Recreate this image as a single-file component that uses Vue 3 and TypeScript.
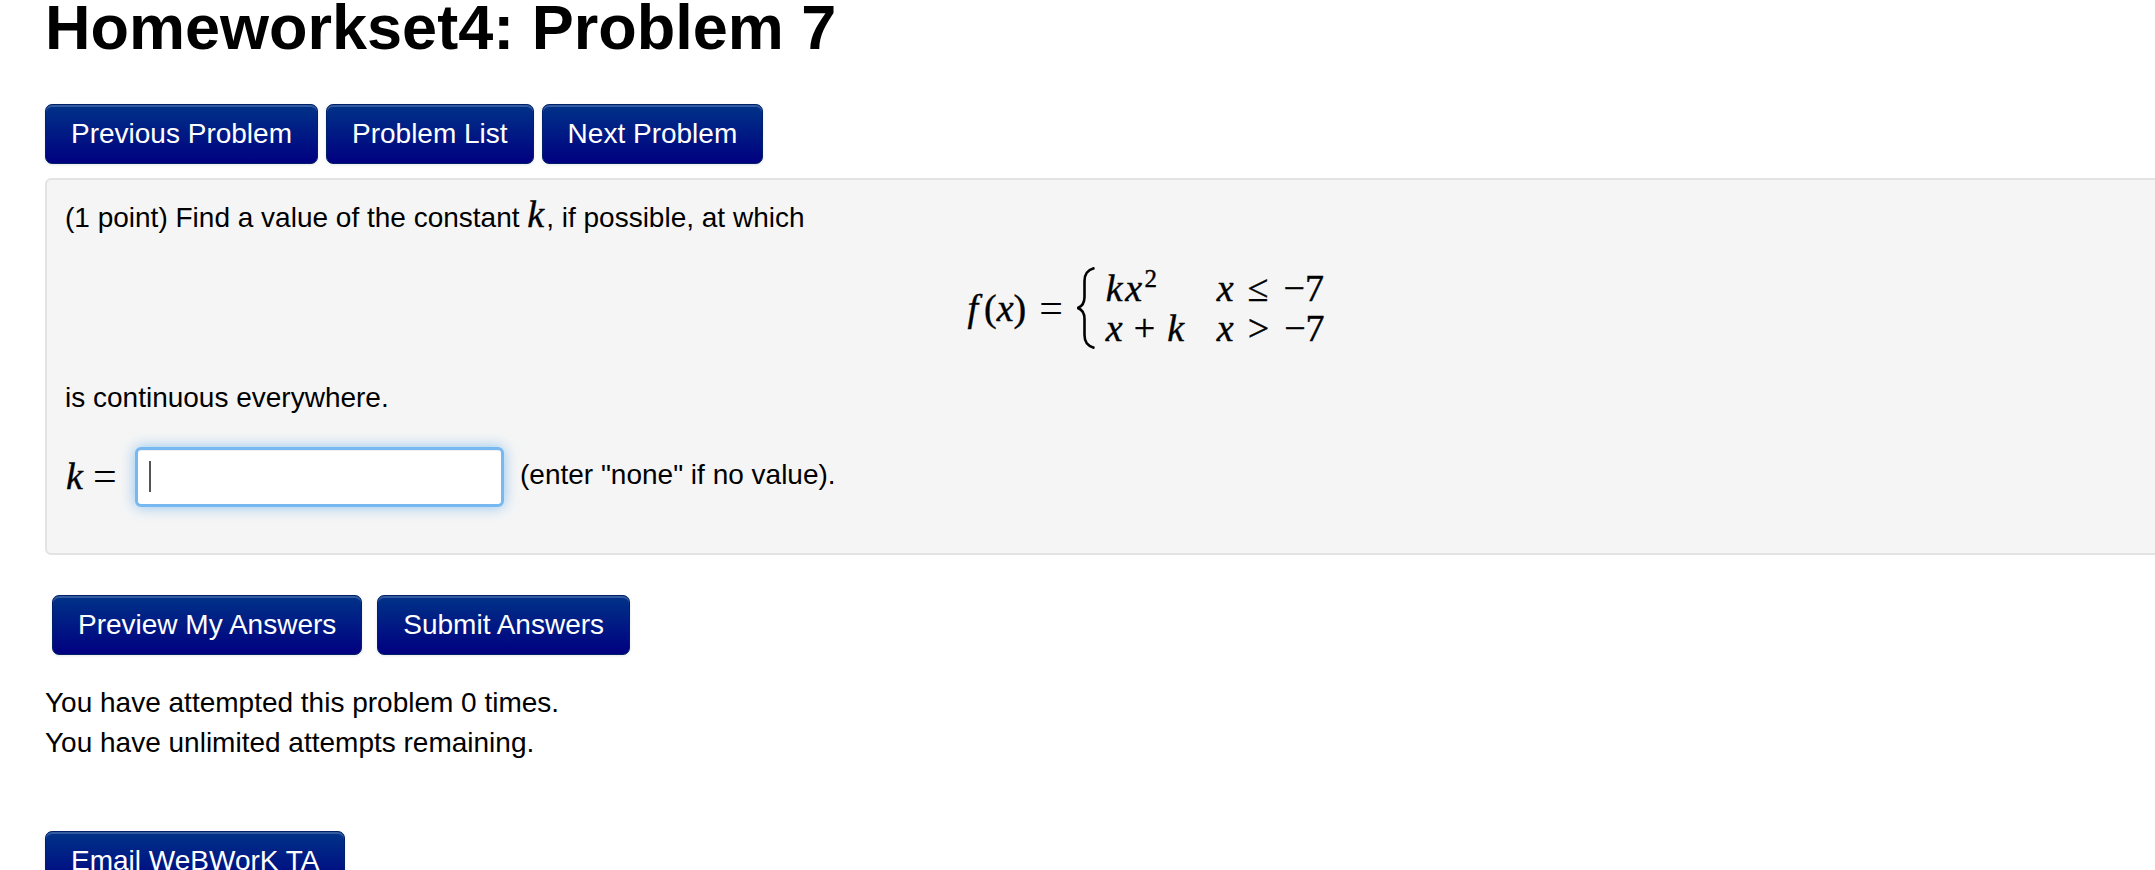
<script setup lang="ts">
const navButtons: string[] = ['Previous Problem', 'Problem List', 'Next Problem']
const answerButtons: string[] = ['Preview My Answers', 'Submit Answers']
const attempts: string[] = [
  'You have attempted this problem 0 times.',
  'You have unlimited attempts remaining.',
]
</script>

<template>
  <main class="page">
    <h1 class="title">Homeworkset4: Problem 7</h1>

    <nav class="btn-row">
      <a v-for="label in navButtons" :key="label" class="btn">{{ label }}</a>
    </nav>

    <section class="well">
      <p class="line">(1 point) Find a value of the constant <i class="math k-inline">k</i>, if possible, at which</p>

      <div class="display">
        <div class="equation math">
          <span class="lhs"><i class="f">f</i>(<i>x</i>)</span>
          <span class="eq">=</span>
          <svg class="brace" viewBox="0 0 18 82" width="18" height="82" aria-hidden="true">
            <path d="M17.5 1 C10 3 7.5 7 7.5 14 L7.5 30 C7.5 36 5 39.5 0.8 41 C5 42.5 7.5 46 7.5 52 L7.5 68 C7.5 75 10 79 17.5 81" fill="none" stroke="#000" stroke-width="2.6" />
          </svg>
          <div class="cases">
            <span class="c1"><i class="kx">kx</i><sup>2</sup></span>
            <span class="c2"><i>x</i><span class="rel">≤</span><span class="neg">−7</span></span>
            <span class="c1"><i>x</i><span class="plus">+</span><i>k</i></span>
            <span class="c2"><i>x</i><span class="rel">&gt;</span><span class="neg">−7</span></span>
          </div>
        </div>
      </div>

      <p class="line">is continuous everywhere.</p>

      <div class="answer">
        <span class="answer-label math"><i>k</i><span class="answer-eq">=</span></span>
        <label class="field">
          <input class="input" type="text" aria-label="k" />
          <span class="caret"></span>
        </label>
        <span class="hint">(enter "none" if no value).</span>
      </div>
    </section>

    <div class="btn-row submit-row">
      <a v-for="label in answerButtons" :key="label" class="btn">{{ label }}</a>
    </div>

    <div class="attempts">
      <p v-for="text in attempts" :key="text" class="line">{{ text }}</p>
    </div>

    <a class="btn email">Email WeBWorK TA</a>
  </main>
</template>

<style>
html,
body {
  margin: 0;
  height: 870px;
  overflow: hidden;
  background: #fff;
}
</style>

<style scoped>
.page {
  box-sizing: border-box;
  width: 2155px;
  height: 870px;
  padding-left: 45px;
  overflow: hidden;
  color: #000;
  font-family: "Liberation Sans", Arial, sans-serif;
  font-size: 28px;
  line-height: 40px;
}
.title {
  margin: 0 0 50px;
  font-size: 63px;
  line-height: 54px;
  font-weight: 700;
  white-space: nowrap;
}
.btn-row {
  display: flex;
  gap: 8px;
}
.btn {
  box-sizing: border-box;
  display: inline-flex;
  align-items: center;
  height: 60px;
  padding: 0 25px;
  border: 1px solid #00206a;
  border-radius: 7px;
  background: linear-gradient(to bottom, #003388, #000080);
  box-shadow: inset 0 2px 0 rgba(255, 255, 255, 0.2), 0 1px 3px rgba(0, 0, 0, 0.1);
  color: #fff;
  font-size: 28px;
  white-space: nowrap;
}
.well {
  box-sizing: border-box;
  width: 2204px;
  height: 377px;
  margin-top: 14px;
  padding: 18px 18px 0;
  border: 2px solid #e3e3e3;
  border-radius: 6px;
  background: #f5f5f5;
}
.line {
  margin: 0;
  white-space: nowrap;
}
.math {
  font-family: "Liberation Serif", "Times New Roman", serif;
  -webkit-text-stroke: 0.4px #000;
}
.k-inline {
  font-size: 38px;
  line-height: 0;
  margin-right: 2px;
}
.display {
  display: flex;
  justify-content: center;
  align-items: center;
  height: 140px;
}
.equation {
  display: flex;
  align-items: center;
  font-size: 38px;
  line-height: 40px;
}
.f {
  margin: 0 6px 0 0;
}
.lhs {
  margin-left: -2px;
  padding-right: 1px;
}
.eq {
  margin: 0 14px 0 12px;
  font-size: 42px;
  -webkit-text-stroke: 0;
}
.brace {
  margin-right: 11px;
}
.cases {
  display: grid;
  grid-template-columns: 78px auto;
  column-gap: 33px;
}
.c1,
.c2 {
  display: block;
  white-space: nowrap;
}
.kx {
  letter-spacing: 2.5px;
}
.cases sup {
  font-size: 25px;
  line-height: 0;
}
.plus {
  margin: 0 12px 0 11px;
}
.rel {
  margin: 0 15px 0 14px;
}
.answer {
  display: flex;
  align-items: center;
  margin-top: 29px;
  margin-left: 1px;
}
.answer-label {
  display: inline-flex;
  align-items: center;
  width: 69px;
  height: 40px;
  margin-top: -3px;
  font-size: 38px;
}
.answer-eq {
  margin-left: 10px;
  font-size: 42px;
  -webkit-text-stroke: 0;
}
.field {
  position: relative;
  display: block;
  width: 369px;
  height: 60px;
}
.input {
  box-sizing: border-box;
  display: block;
  width: 100%;
  height: 100%;
  padding: 0;
  border: 3px solid #78b8f0;
  border-radius: 6px;
  outline: none;
  background: #fff;
  box-shadow: inset 0 1px 1px rgba(0, 0, 0, 0.075), 0 0 14px rgba(82, 168, 236, 0.65);
}
.caret {
  position: absolute;
  left: 14px;
  top: 14px;
  width: 2px;
  height: 31px;
  background: #555;
}
.hint {
  margin-left: 16px;
  margin-top: -4px;
  white-space: nowrap;
}
.submit-row {
  gap: 15px;
  margin: 40px 0 0 7px;
}
.attempts {
  margin-top: 28px;
}
.email {
  margin-top: 68px;
}
</style>
